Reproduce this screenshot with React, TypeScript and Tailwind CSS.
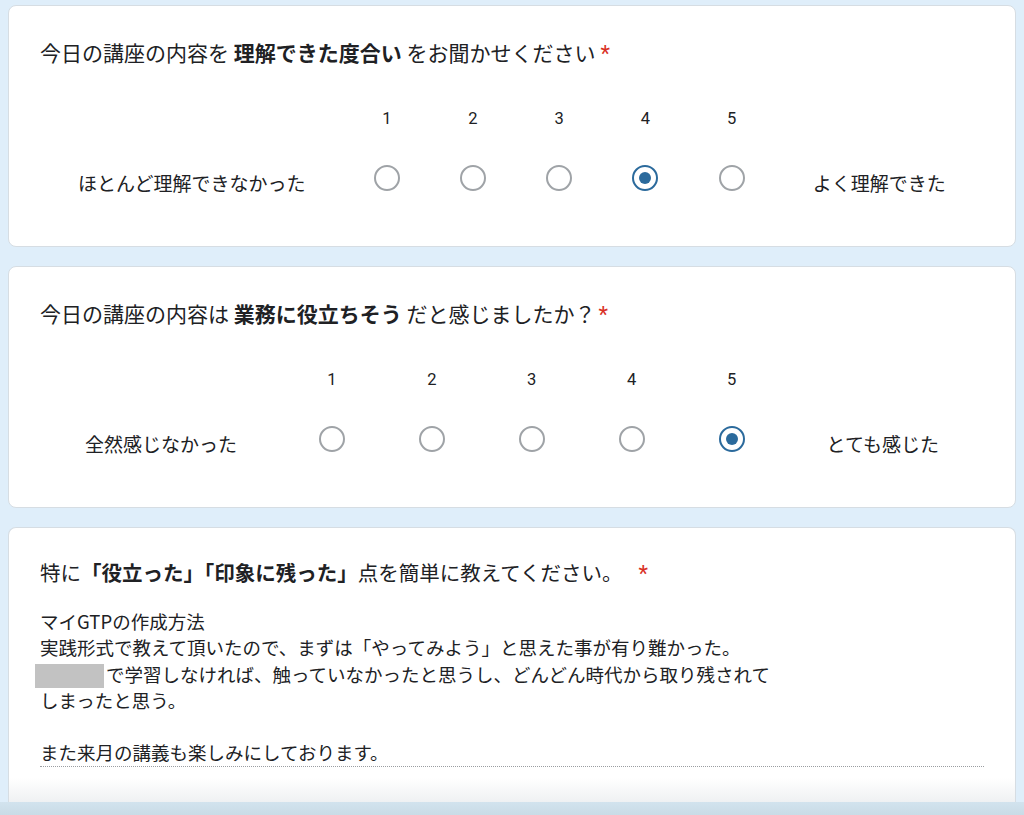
import { Fragment } from 'react';

const JP = "font-['Noto_Sans_CJK_JP','Noto_Sans',sans-serif]";

type ScaleProps = {
  low: string;
  high: string;
  value: number;
};

function Radio({ checked }: { checked: boolean }) {
  if (checked) {
    return (
      <span className="flex h-[26px] w-[26px] items-center justify-center rounded-full border-[2.5px] border-[#2b6a9c]">
        <span className="h-3 w-3 rounded-full bg-[#2b6a9c]" />
      </span>
    );
  }
  return <span className="block h-[26px] w-[26px] rounded-full border-[2.5px] border-[#9fa3a7]" />;
}

function LinearScale({ low, high, value }: ScaleProps) {
  return (
    <div className="mt-[39px] flex items-end">
      <div className="flex-auto whitespace-nowrap px-4 text-center text-[19px] leading-7 text-[#202124]">{low}</div>
      {[1, 2, 3, 4, 5].map((n) => (
        <div key={n} className="flex w-[42px] flex-auto flex-col items-center pb-[6px]">
          <span className="font-['Roboto',sans-serif] text-[16.5px] leading-6 text-[#202124]">{n}</span>
          <span className="mt-[34px]">
            <Radio checked={n === value} />
          </span>
        </div>
      ))}
      <div className="flex-auto whitespace-nowrap px-4 text-center text-[19px] leading-7 text-[#202124]">{high}</div>
    </div>
  );
}

function Star({ gap }: { gap: string }) {
  return <span className={`${gap} font-['Roboto',sans-serif] text-[22px] text-[#d93025]`}>*</span>;
}

const answer = [
  'マイGTPの作成方法',
  '実践形式で教えて頂いたので、まずは「やってみよう」と思えた事が有り難かった。',
  null,
  'しまったと思う。',
  '',
  'また来月の講義も楽しみにしております。',
];

export default function App() {
  return (
    <div className={`${JP} flex h-[815px] flex-col overflow-hidden bg-[#dfeefa]`}>
      <div className="flex min-h-0 flex-1 flex-col gap-[19px] px-2 pt-[5px]">
        {/* Q1 */}
        <section className="h-[242px] shrink-0 rounded-lg border border-[#d6dde3] bg-white px-[31px] pt-8">
          <h2 className="text-[21px] leading-7 text-[#202124]">
            今日の講座の内容を <b className="font-bold">理解できた度合い</b> をお聞かせください
            <Star gap="ml-[5px]" />
          </h2>
          <LinearScale low="ほとんど理解できなかった" high="よく理解できた" value={4} />
        </section>

        {/* Q2 */}
        <section className="h-[242px] shrink-0 rounded-lg border border-[#d6dde3] bg-white px-[31px] pt-8">
          <h2 className="text-[21px] leading-7 text-[#202124]">
            今日の講座の内容は <b className="font-bold">業務に役立ちそう</b> だと感じましたか？
            <Star gap="ml-[3px]" />
          </h2>
          <LinearScale low="全然感じなかった" high="とても感じた" value={5} />
        </section>

        {/* Q3 */}
        <section className="flex min-h-0 flex-1 flex-col rounded-t-lg border border-b-0 border-[#d6dde3] bg-white pt-[30px]">
          <div className="px-[31px]">
            <h2 className="text-[20.5px] leading-7 text-[#202124]">
              特に<b className="font-bold">「役立った」「印象に残った」</b>点を簡単に教えてください。
              <Star gap="ml-[16px]" />
            </h2>
            <div className="mt-[20px] border-b border-dotted border-[#9a9da1] pb-0 text-[18.5px] leading-[26.3px] text-[#202124]">
              {answer.map((line, i) => (
                <Fragment key={i}>
                  {line === null ? (
                    <div className="h-[26.3px] whitespace-nowrap">
                      <span className="-ml-[5px] mr-[2px] inline-block h-[24px] w-[69px] bg-[#c2c2c2] align-[-6px]" />
                      で学習しなければ、触っていなかったと思うし、どんどん時代から取り残されて
                    </div>
                  ) : (
                    <div className="h-[26.3px] whitespace-nowrap">{line}</div>
                  )}
                </Fragment>
              ))}
            </div>
          </div>
          <div className="mt-auto h-[24px] bg-gradient-to-b from-white to-[#eff1f3]" />
        </section>
      </div>
      <div className="h-[13px] shrink-0 bg-gradient-to-b from-[#d2e3ee] to-[#c9dbe6]" />
    </div>
  );
}
